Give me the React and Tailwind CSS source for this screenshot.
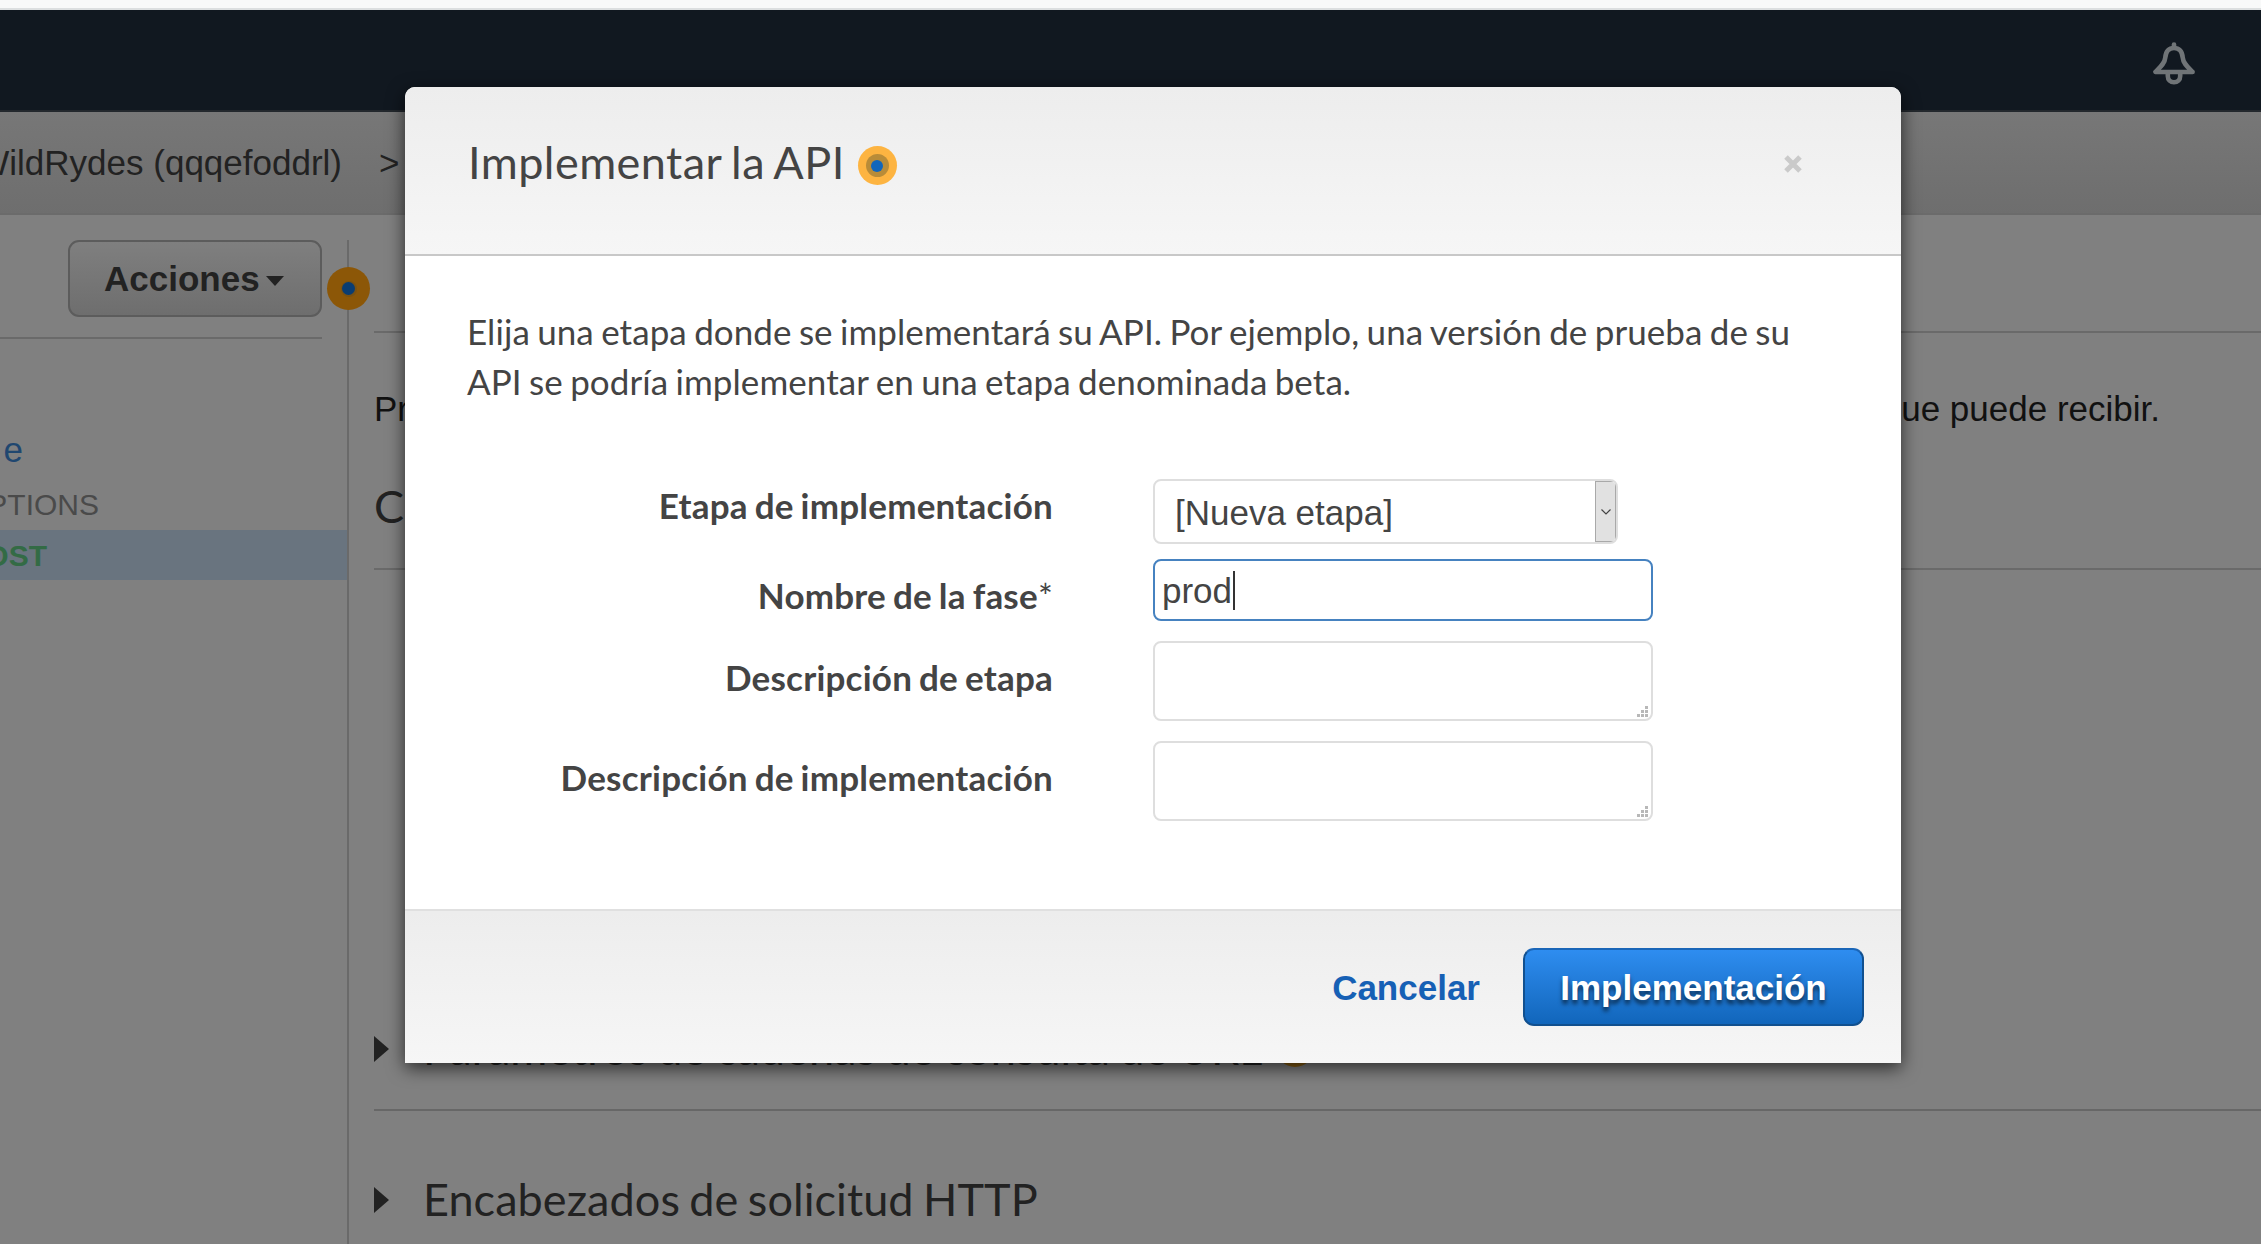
function Dot({ size, outer, ring, core, ringSize, coreSize }) {
  return (
    <span className={`flex shrink-0 items-center justify-center rounded-full ${size} ${outer}`}>
      <span className={`flex items-center justify-center rounded-full ${ringSize} ${ring}`}>
        <span className={`block rounded-full ${coreSize} ${core}`} />
      </span>
    </span>
  );
}

function Bell() {
  return (
    <svg viewBox="0 0 44 44" className="h-[44px] w-[44px]" fill="none" stroke="#707477" strokeWidth="4.6" strokeLinejoin="round" strokeLinecap="round">
      <path d="M22 2.5V5" />
      <path d="M22 6C16.500 6 13.800 10 13.300 15.500C12.800 21.500 8.500 25 3.400 30H40.600C35.500 25 31.200 21.500 30.700 15.500C30.200 10 27.500 6 22 6Z" />
      <path d="M15.800 31V34C15.800 38 18.500 40.300 22 40.300C25.500 40.300 28.200 38 28.200 34V31" />
    </svg>
  );
}

function Section({ children }) {
  return (
    <div className="flex h-[50px] items-center">
      <svg viewBox="0 0 15 26" className="h-[26px] w-[15px] shrink-0">
        <path d="M0 0L15 13L0 26Z" fill="#222" />
      </svg>
      <div className="ml-[34px] flex items-center gap-[14px] pb-[2px] font-[Lato,sans-serif] text-[45px] leading-[50px] tracking-[0.07px] whitespace-nowrap text-[#222] [word-spacing:-2.2px]">
        {children}
      </div>
    </div>
  );
}

function Grip() {
  return (
    <svg viewBox="0 0 11 11" className="absolute right-[3px] bottom-[2px] h-[11px] w-[11px]" fill="#b8b8b8">
      <path d="M8 0h3v3h-3zM4 4h3v3h-3zM8 4h3v3h-3zM0 8h3v3h-3zM4 8h3v3h-3zM8 8h3v3h-3z" />
    </svg>
  );
}

function Row({ label, required, className, labelClass, children }) {
  return (
    <div className={`flex items-start ${className}`}>
      <label className={`w-[586px] shrink-0 text-right font-[Lato,sans-serif] text-[35px] leading-[50px] font-bold tracking-[0.22px] [word-spacing:-1.8px] ${labelClass}`}>
        {label}
        {required && <span className="font-normal">*</span>}
      </label>
      <div className="ml-[100px]">{children}</div>
    </div>
  );
}

function Page() {
  return (
    <div className="flex h-full flex-col">
      <div className="h-[10px] shrink-0 border-b-2 border-[#dcdfe0] bg-[#f8f9f9]" />
      <header className="flex h-[102px] shrink-0 items-start justify-end border-b-2 border-[#23282d] bg-[#111820] pt-[32px] pr-[65px]">
        <Bell />
      </header>
      <nav className="flex h-[103px] shrink-0 items-center border-b-2 border-[#6b6b6b] bg-linear-to-b from-[#777] to-[#6e6e6e] pt-[2px] text-[35px] text-[#222]">
        <div className="flex w-[342px] shrink-0 justify-end whitespace-nowrap">WildRydes (qqqefoddrl)</div>
        <span className="ml-[37px]">&gt;</span>
      </nav>
      <div className="flex min-h-0 flex-1 pt-[25px]">
        <aside className="relative w-[349px] shrink-0 border-r-2 border-[#6a6a6a]">
          <div className="flex h-[99px] w-[322px] items-start justify-end border-b-2 border-[#6a6a6a]">
            <div className="flex h-[77px] w-[254px] items-center rounded-[11px] border-2 border-[#5c5c5c] bg-linear-to-b from-[#7f7f7f] to-[#6e6e6e] pt-[2px] pl-[34px] text-[35px] font-bold text-[#222]">
              Acciones
              <svg viewBox="0 0 18 10" className="mt-[3px] ml-[6px] h-[10px] w-[18px]">
                <path d="M0 0H18L9 10Z" fill="#222" />
              </svg>
            </div>
          </div>
          <div className="mt-[86px] ml-[2px] flex h-[50px] w-[21px] items-center justify-end overflow-hidden text-[35px] text-[#1f4770]">
            <span>e</span>
          </div>
          <div className="mt-[4px] mb-px flex h-[50px] w-[99px] items-center justify-end overflow-hidden text-[30px] text-[#4a4a4a]">OPTIONS</div>
          <div className="flex h-[50px] w-full items-center bg-[#69747f] pt-px">
            <div className="flex w-[47px] justify-end text-[30px] font-bold text-[#336b45]">POST</div>
          </div>
          <div className="absolute top-[27px] -right-[23px]">
            <Dot size="size-[43px]" outer="bg-[#8c5707]" ringSize="size-[16px]" ring="bg-[#7a5212]" coreSize="size-[13px]" core="bg-[#0a3d72]" />
          </div>
        </aside>
        <main className="ml-[25px] min-w-0 flex-1 overflow-hidden">
          <div className="h-[93px] border-b-2 border-[#6a6a6a]" />
          <div className="mt-[51px] flex h-[50px] w-[1786px] items-center justify-between text-[35px] whitespace-nowrap text-[#111]">
            <span>Pr</span>
            <span>que puede recibir.</span>
          </div>
          <div className="mt-[47px] flex h-[89px] border-b-2 border-[#6a6a6a] font-[Lato,sans-serif] text-[45px] leading-[50px] text-[#222]">C</div>
          <div className="mt-[454px] h-[87px] border-b-2 border-[#676767]">
            <Section>
              Parámetros de cadenas de consulta de URL
              <Dot size="size-[38px]" outer="bg-[#8a5f14]" ringSize="size-[22px]" ring="bg-[#6f4f18]" coreSize="size-[12px]" core="bg-[#0b3765]" />
            </Section>
          </div>
          <div className="mt-[64px]">
            <Section>Encabezados de solicitud HTTP</Section>
          </div>
        </main>
      </div>
    </div>
  );
}

function Modal() {
  return (
    <div className="absolute top-[87px] left-[405px] flex h-[976px] w-[1496px] flex-col overflow-hidden rounded-t-[10px] bg-white text-[#444] shadow-[0_5px_18px_0_rgba(0,0,0,0.68)]">
      <div className="flex h-[169px] shrink-0 items-start border-b-2 border-[#c8c8c8] bg-linear-to-b from-[#ededed] to-[#f6f6f6] pt-[50px] pr-[99px] pl-[63px]">
        <h1 className="font-[Lato,sans-serif] text-[45px] leading-[50px] tracking-[0.45px] [word-spacing:-2.2px]">Implementar la API</h1>
        <div className="mt-[9px] ml-[13px]">
          <Dot size="size-[39px]" outer="bg-[#fdb441]" ringSize="size-[23px]" ring="bg-[#b98c38]" coreSize="size-[12px]" core="bg-[#1166bb]" />
        </div>
        <svg viewBox="0 0 18 18" className="mt-[18px] ml-auto h-[18px] w-[18px]" stroke="#cacaca" strokeWidth="5">
          <path d="M2 2L16 16M16 2L2 16" />
        </svg>
      </div>
      <div className="flex-1 pt-[50px] pl-[62px]">
        <p className="w-[1360px] font-[Lato,sans-serif] text-[35px] leading-[50px] tracking-[0.07px] [word-spacing:-1.7px]">
          Elija una etapa donde se implementará su API. Por ejemplo, una versión de prueba de su
          <br />
          API se podría implementar en una etapa denominada beta.
        </p>
        <Row label="Etapa de implementación" className="mt-[73px] h-[80px]" labelClass="mt-[1px]">
          <div className="flex h-[65px] w-[465px] items-center overflow-hidden rounded-[8px] border-2 border-[#dedede] pl-[20px] text-[35px]">
            <span className="pt-[3px]">[Nueva etapa]</span>
            <div className="ml-auto flex h-full w-[21px] items-center justify-center border border-[#a9a9a9] bg-[#e1e1e1]">
              <svg viewBox="0 0 10 6" className="h-[6px] w-[10px]" fill="none" stroke="#444" strokeWidth="1.2">
                <path d="M0.500 0.500L5 5L9.500 0.500" />
              </svg>
            </div>
          </div>
        </Row>
        <Row label="Nombre de la fase" required className="h-[82px]" labelClass="mt-[11px]">
          <div className="flex h-[62px] w-[500px] items-center rounded-[8px] border-2 border-[#4682c0] pl-[7px] text-[35px]">
            <span className="pt-[3px]">prod</span>
            <span className="ml-px h-[39px] w-[2px] bg-[#333]" />
          </div>
        </Row>
        <Row label="Descripción de etapa" className="h-[100px]" labelClass="mt-[11px]">
          <div className="relative h-[80px] w-[500px] rounded-[8px] border-2 border-[#dedede]">
            <Grip />
          </div>
        </Row>
        <Row label="Descripción de implementación" className="h-[80px]" labelClass="mt-[11px]">
          <div className="relative h-[80px] w-[500px] rounded-[8px] border-2 border-[#dedede]">
            <Grip />
          </div>
        </Row>
      </div>
      <div className="flex h-[154px] shrink-0 items-start justify-end border-t-2 border-[#e0e0e0] bg-linear-to-b from-[#ededed] to-[#f6f6f6] pt-[37px] pr-[37px] text-[35px] leading-[74px] font-bold">
        <button className="mr-[43px] h-[78px] pt-[2px] text-[#1660b5]">Cancelar</button>
        <button className="h-[78px] w-[341px] rounded-[11px] border-2 border-[#11508f] border-t-[#1a66b8] bg-linear-to-b from-[#2e8df0] to-[#1166bb] pt-px text-white [text-shadow:0_4px_4px_rgba(0,0,0,0.6)]">
          Implementación
        </button>
      </div>
    </div>
  );
}

export default function App() {
  return (
    <div className="relative h-[1244px] w-[2261px] overflow-hidden bg-[#808080] font-['Liberation_Sans',Arial,sans-serif]">
      <Page />
      <Modal />
    </div>
  );
}
